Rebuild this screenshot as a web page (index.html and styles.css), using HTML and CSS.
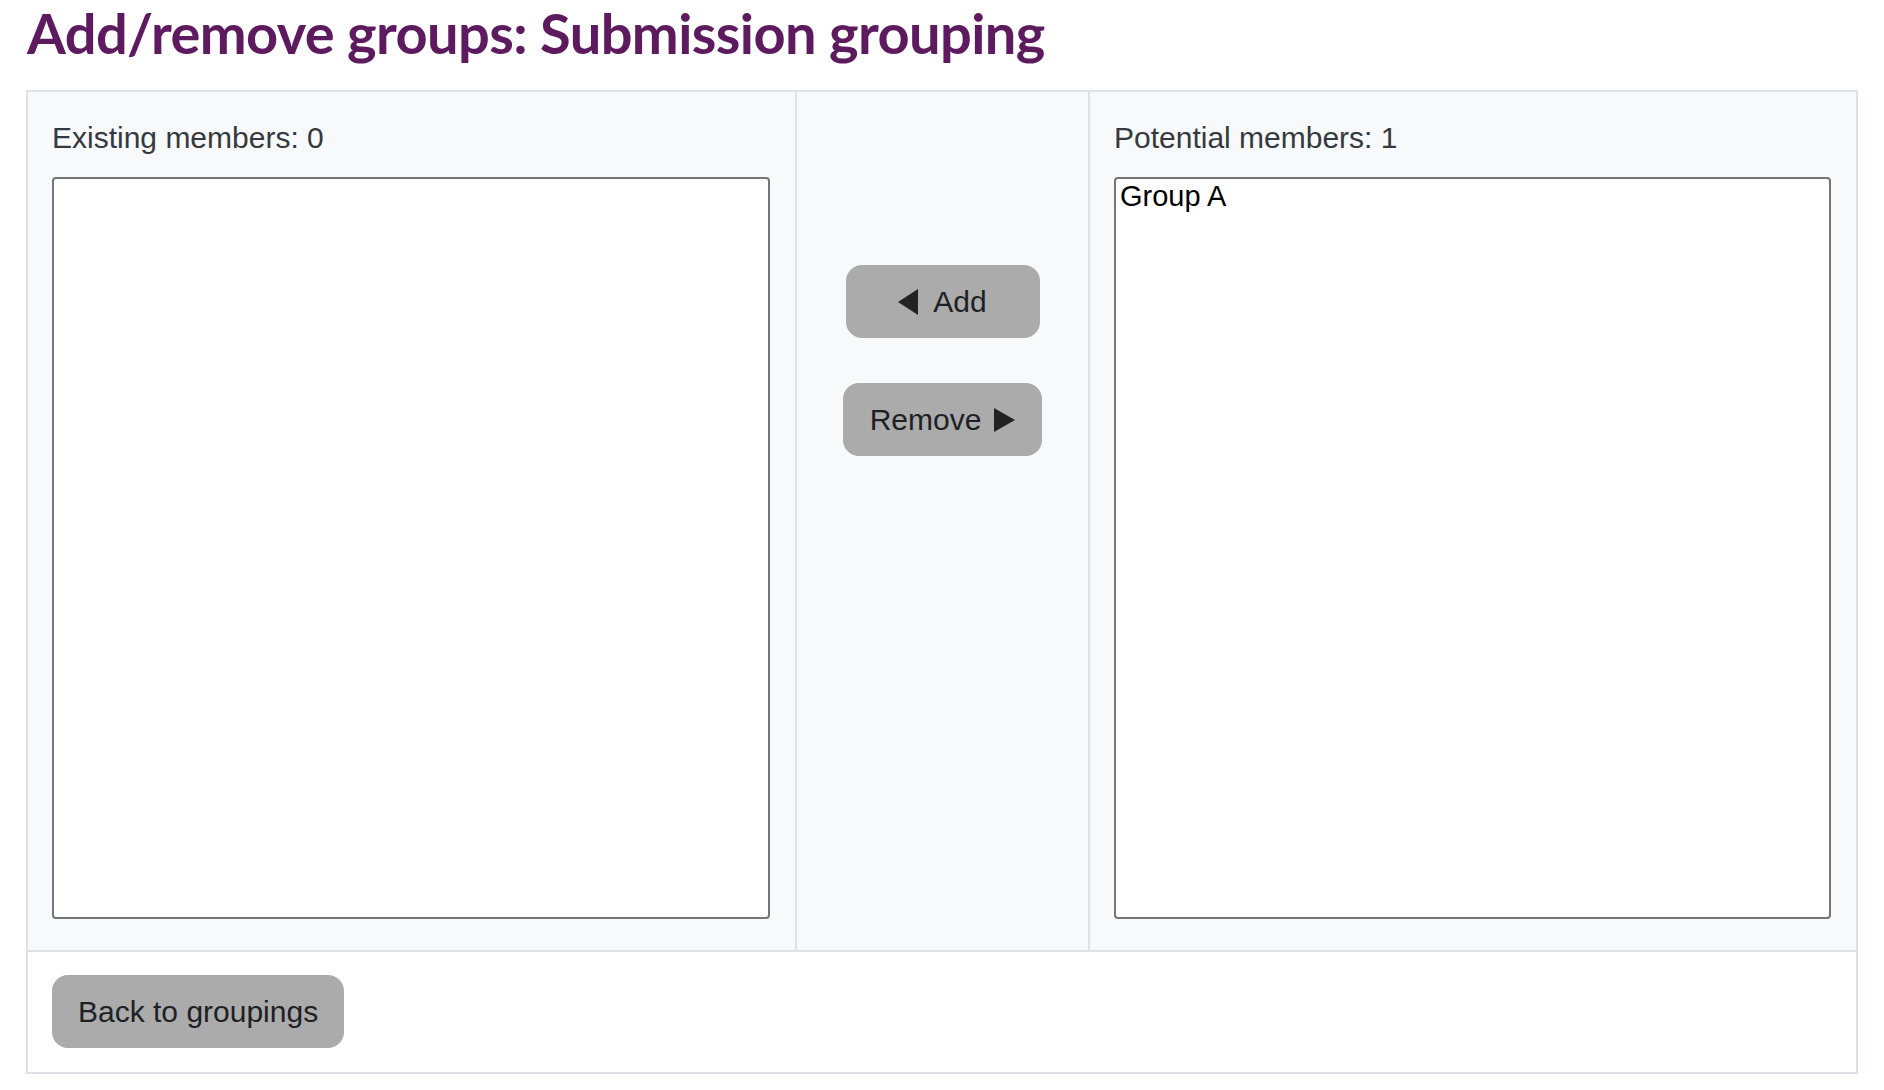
FILE: index.html
```html
<!DOCTYPE html>
<html lang="en">
<head>
<meta charset="utf-8">
<title>Add/remove groups: Submission grouping</title>
<link rel="stylesheet" href="styles.css">
</head>
<body>
<div class="page">
  <h1 class="title">Add/remove groups: Submission grouping</h1>
  <form class="panel">
    <div class="columns">
      <div class="col col-side">
        <label class="col-label">Existing members: 0</label>
        <div class="listbox" role="listbox"></div>
      </div>
      <div class="col col-mid">
        <button type="button" class="btn btn-add">
          <svg class="tri" width="20" height="26" viewBox="0 0 20 26"><polygon points="20,0 20,26 0,13"/></svg>
          <span>Add</span>
        </button>
        <button type="button" class="btn btn-remove">
          <span>Remove</span>
          <svg class="tri" width="21" height="24" viewBox="0 0 21 24"><polygon points="0,0 21,12 0,24"/></svg>
        </button>
      </div>
      <div class="col col-side">
        <label class="col-label">Potential members: 1</label>
        <div class="listbox" role="listbox">
          <div class="option" role="option">Group A</div>
        </div>
      </div>
    </div>
    <div class="footer">
      <button type="button" class="btn btn-back">Back to groupings</button>
    </div>
  </form>
</div>
</body>
</html>
```

FILE: styles.css
```css
* {
  box-sizing: border-box;
}

html, body {
  margin: 0;
  padding: 0;
  background: #ffffff;
}

body {
  font-family: "Liberation Sans", Arial, Helvetica, sans-serif;
  color: #1d2125;
}

.page {
  padding: 0 26px;
}

.title {
  margin: 1px 0 25px 1px;
  font-family: Lato, "Open Sans", sans-serif;
  font-weight: 700;
  font-size: 56px;
  line-height: 64px;
  color: #5d1a5e;
  letter-spacing: -0.6px;
}

.panel {
  width: 1832px;
  border: 2px solid #dee2e6;
  margin: 0;
}

.columns {
  display: grid;
  grid-template-columns: 767px 295px 1fr;
  background: #f8f9fa;
  border-bottom: 2px solid #dee2e6;
}

.col {
  padding: 23px 25px 31px 24px;
}

.col-label {
  display: block;
  font-size: 30px;
  line-height: 45px;
  color: #343a40;
  margin-bottom: 17px;
}

.listbox {
  height: 742px;
  background: #ffffff;
  border: 2px solid #767676;
  border-radius: 4px;
  padding: 1px 4px;
}

.option {
  font-size: 29px;
  line-height: 33px;
  color: #000000;
}

.col-mid {
  border-left: 2px solid #dee2e6;
  border-right: 2px solid #dee2e6;
  padding: 173px 0 0 0;
  display: flex;
  flex-direction: column;
  align-items: center;
  gap: 45px;
}

.btn {
  display: inline-flex;
  align-items: center;
  justify-content: center;
  gap: 13px;
  font-family: "Liberation Sans", Arial, Helvetica, sans-serif;
  font-size: 30px;
  line-height: 45px;
  color: #1d2125;
  background: #ababab;
  border: 2px solid #ababab;
  border-radius: 16px;
  padding: 12px 24px;
  cursor: pointer;
}

.btn-add {
  min-width: 194px;
  gap: 15px;
}

.btn-remove {
  padding: 12px 25px;
}

.tri {
  display: block;
  fill: #222222;
}

.footer {
  background: #ffffff;
  padding: 23px 24px 24px 24px;
}

.btn-back {
  display: inline-flex;
}
```
